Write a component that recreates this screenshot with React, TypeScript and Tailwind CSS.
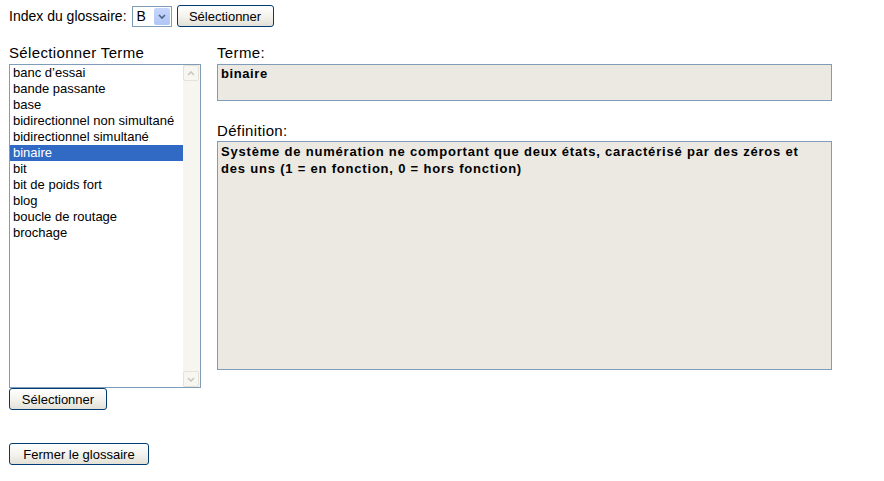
import React from 'react'

const TERMS = [
  "banc d’essai",
  "bande passante",
  "base",
  "bidirectionnel non simultané",
  "bidirectionnel simultané",
  "binaire",
  "bit",
  "bit de poids fort",
  "blog",
  "boucle de routage",
  "brochage",
]

const SELECTED = "binaire"

function XpButton({ label, className = "" }: { label: string; className?: string }) {
  return (
    <button
      className={
        "h-[22px] rounded-[3px] border border-[#003c74] bg-gradient-to-b from-[#ffffff] via-[#f4f3ee] to-[#e3e1d6] px-[10px] text-[13px] leading-none text-black " +
        className
      }
    >
      {label}
    </button>
  )
}

function ScrollArrow({ up }: { up: boolean }) {
  return (
    <div className="flex h-[16px] w-[16px] items-center justify-center rounded-[2px] border border-[#e6e3d6] bg-[#f7f6f1]">
      <svg width="8" height="5" viewBox="0 0 8 5">
        <path
          d={up ? "M1 4 L4 1 L7 4" : "M1 1 L4 4 L7 1"}
          fill="none"
          stroke="#c9c8c0"
          strokeWidth="1.6"
        />
      </svg>
    </div>
  )
}

export default function App() {
  return (
    <div className="h-[481px] w-[884px] bg-white px-[9px] text-black" style={{ fontFamily: '"Liberation Sans", Arial, sans-serif' }}>
      {/* index row */}
      <div className="flex h-[33px] items-center pb-[1px] text-[14px]">
        <span>Index du glossaire:</span>
        <div className="ml-[5px] flex h-[21px] w-[40px] items-center border border-[#7f9db9] bg-white pl-[4px] pr-[1px]">
          <span className="flex-1 text-[14px]">B</span>
          <div className="flex h-[17px] w-[16px] items-center justify-center rounded-[2px] bg-gradient-to-b from-[#c6d5fb] to-[#b0c6f6]">
            <svg width="8" height="5" viewBox="0 0 8 5">
              <path d="M1 1 L4 4 L7 1" fill="none" stroke="#4d6185" strokeWidth="1.6" />
            </svg>
          </div>
        </div>
        <XpButton label="Sélectionner" className="ml-[5px] w-[97px]" />
      </div>

      <div className="flex gap-[16px]">
        {/* left column */}
        <div className="flex w-[192px] flex-col">
          <div className="h-[31px] pt-[11px] text-[15px] leading-[18px] tracking-[0.35px]">Sélectionner Terme</div>
          <div className="flex h-[324px] border border-[#7f9db9] bg-white">
            <ul className="flex-1 text-[13px] leading-[16px]">
              {TERMS.map((t) => (
                <li
                  key={t}
                  className={
                    "h-[16px] whitespace-nowrap pl-[3px] " +
                    (t === SELECTED ? "bg-[#316ac5] text-white" : "")
                  }
                >
                  {t}
                </li>
              ))}
            </ul>
            <div className="flex w-[17px] flex-col justify-between bg-[#f6f5ef]">
              <ScrollArrow up />
              <ScrollArrow up={false} />
            </div>
          </div>
          <XpButton label="Sélectionner" className="w-[98px] self-start" />
          <XpButton label="Fermer le glossaire" className="mt-[33px] w-[140px] self-start" />
        </div>

        {/* right column */}
        <div className="flex w-[615px] flex-col">
          <div className="h-[31px] pt-[11px] text-[15px] leading-[18px] tracking-[0.35px]">Terme:</div>
          <div className="h-[37px] border border-[#7f9db9] bg-[#ebe9e2] px-[3px] pt-[1px] text-[13px] font-bold leading-[16px] tracking-[0.6px]">
            binaire
          </div>
          <div className="h-[40px] pt-[21px] text-[15px] leading-[18px] tracking-[0.35px]">Définition:</div>
          <div className="h-[229px] border border-[#7f9db9] bg-[#ebe9e2] pl-[3px] pr-[20px] pt-[1px] text-[13px] font-bold leading-[17px] tracking-[0.8px]">
            Système de numération ne comportant que deux états, caractérisé par des zéros et des uns (1 = en fonction, 0 = hors fonction)
          </div>
        </div>
      </div>
    </div>
  )
}
